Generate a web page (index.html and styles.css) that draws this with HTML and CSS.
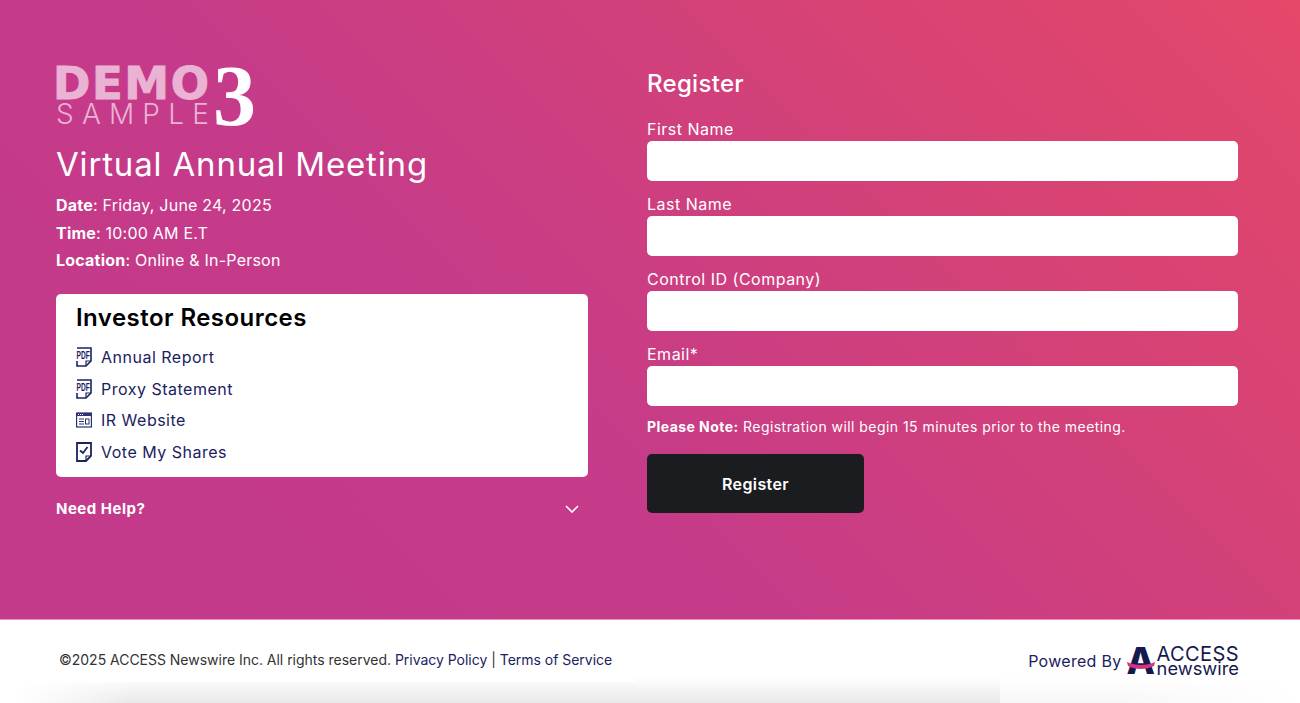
FILE: index.html
```html
<!DOCTYPE html>
<html lang="en">
<head>
    <meta charset="UTF-8">
    <meta name="viewport" content="width=device-width, initial-scale=1.0">
    <title>Virtual Annual Meeting</title>
    <link rel="stylesheet" href="styles.css">
</head>
<body>
    <main class="hero">
        <!-- Meeting details -->
        <section class="details">
            <div class="logo">
                <div class="logo-words">
                    <span class="logo-demo">DEMO</span>
                    <span class="logo-sample">SAMPLE</span>
                </div>
                <span class="logo-three">3</span>
            </div>
            <h1>Virtual Annual Meeting</h1>
            <p class="fact"><strong>Date</strong>: Friday, June 24, 2025</p>
            <p class="fact"><strong>Time</strong>: 10:00 AM E.T</p>
            <p class="fact"><strong>Location</strong>: Online &amp; In-Person</p>

            <div class="resources">
                <h2>Investor Resources</h2>
                <ul>
                    <li>
                        <svg class="res-icon" viewBox="0 0 16 20" aria-hidden="true">
                            <path d="M1 1h14v13l-5 5H1v-5" fill="none" stroke="#1a2260" stroke-width="1.6"/>
                            <path d="M10 19v-5h5" fill="none" stroke="#1a2260" stroke-width="1.2"/>
                            <rect x="0" y="2" width="13" height="11" fill="#fff"/>
                            <text class="pdf-text" transform="translate(0.5 12) scale(0.66 1)">PDF</text>
                        </svg>
                        <a href="#">Annual Report</a>
                    </li>
                    <li>
                        <svg class="res-icon" viewBox="0 0 16 20" aria-hidden="true">
                            <path d="M1 1h14v13l-5 5H1v-5" fill="none" stroke="#1a2260" stroke-width="1.6"/>
                            <path d="M10 19v-5h5" fill="none" stroke="#1a2260" stroke-width="1.2"/>
                            <rect x="0" y="2" width="13" height="11" fill="#fff"/>
                            <text class="pdf-text" transform="translate(0.5 12) scale(0.66 1)">PDF</text>
                        </svg>
                        <a href="#">Proxy Statement</a>
                    </li>
                    <li>
                        <svg class="res-icon" viewBox="0 0 16 20" aria-hidden="true">
                            <rect x="0.6" y="3" width="14.8" height="14" fill="none" stroke="#2b3370" stroke-width="1.2"/>
                            <path d="M0.6 3h14.8v3H0.6z" fill="#2b3370"/>
                            <path d="M2 4.5h1M4 4.5h1M6 4.5h1" stroke="#fff" stroke-width="1"/>
                            <path d="M3 9h5M3 11.5h5M3 14h5" stroke="#2b3370" stroke-width="1"/>
                            <rect x="9.5" y="9" width="3.5" height="5" fill="none" stroke="#2b3370" stroke-width="1"/>
                        </svg>
                        <a href="#">IR Website</a>
                    </li>
                    <li>
                        <svg class="res-icon" viewBox="0 0 16 20" aria-hidden="true">
                            <path d="M1 1h14v13l-5 5H1z" fill="none" stroke="#1a2260" stroke-width="1.8"/>
                            <path d="M10 19v-5h5" fill="none" stroke="#1a2260" stroke-width="1.2"/>
                            <path d="M4 8.5l3 2.5 4.5-6" fill="none" stroke="#1a2260" stroke-width="1.8"/>
                        </svg>
                        <a href="#">Vote My Shares</a>
                    </li>
                </ul>
            </div>

            <div class="help">
                <span>Need Help?</span>
                <svg class="chevron" viewBox="0 0 14 8" aria-hidden="true">
                    <path d="M1 1l6 6 6-6" fill="none" stroke="#fff" stroke-width="1.6"/>
                </svg>
            </div>
        </section>

        <!-- Registration form -->
        <section class="register">
            <h2>Register</h2>
            <form>
                <label for="first">First Name</label>
                <input type="text" id="first">
                <label for="last">Last Name</label>
                <input type="text" id="last">
                <label for="control">Control ID (Company)</label>
                <input type="text" id="control">
                <label for="email">Email*</label>
                <input type="email" id="email">
                <p class="note"><strong>Please Note:</strong> Registration will begin 15 minutes prior to the meeting.</p>
                <button type="button">Register</button>
            </form>
        </section>
    </main>

    <footer class="footer">
        <p class="copyright">©2025 ACCESS Newswire Inc. All rights reserved. <a href="#">Privacy Policy</a> | <a href="#">Terms of Service</a></p>
        <div class="powered">
            <span>Powered By</span>
            <div class="access-logo">
                <div class="access-mark">
                    <span class="access-a">A</span>
                    <svg class="swoosh" viewBox="0 0 28 8" aria-hidden="true">
                        <path d="M0 1c8 4 20 4 28 0l-1 4c-8 4-18 4-26 0z" fill="#d6337f"/>
                    </svg>
                </div>
                <div class="access-words">
                    <span class="access-top">ACCESS</span>
                    <span class="access-bottom">newswire</span>
                </div>
            </div>
        </div>
    </footer>
</body>
</html>
```

FILE: styles.css
```css
* {
    margin: 0;
    padding: 0;
    box-sizing: border-box;
}

html, body {
    height: 703px;
    overflow: hidden;
}

body {
    font-family: 'Inter', 'Liberation Sans', sans-serif;
    color: #fff;
    background-color: #fff;
}

.hero {
    height: 620px;
    display: flex;
    gap: 59px;
    padding: 66px 62px 0 56px;
    background: linear-gradient(45deg, #c43a8a 0%, #c53b8a 38%, #d84373 78%, #e4486a 100%);
    border-bottom: 1px solid #ee8fc0;
}

.details {
    width: 532px;
    flex-shrink: 0;
}

.logo {
    position: relative;
    height: 61px;
    width: 200px;
}

.logo-words {
    display: flex;
    flex-direction: column;
    align-items: flex-start;
    color: #eab2d3;
}

.logo-demo {
    font-family: 'DejaVu Sans', sans-serif;
    font-size: 45px;
    font-weight: 700;
    line-height: 36px;
    letter-spacing: 1.6px;
    margin-left: -3px;
    -webkit-text-stroke: 1px #eab2d3;
}

.logo-sample {
    font-size: 28px;
    font-weight: 300;
    line-height: 25px;
    letter-spacing: 8.2px;
}

.logo-three {
    position: absolute;
    left: 157px;
    top: -14px;
    font-family: 'Liberation Serif', serif;
    font-size: 86px;
    font-weight: 700;
    line-height: 88px;
    color: #fff;
}

h1 {
    font-size: 33px;
    font-weight: 400;
    line-height: 40px;
    letter-spacing: 0.83px;
    margin-top: 17px;
    margin-bottom: 8px;
}

.fact {
    font-size: 16px;
    line-height: 27.5px;
    letter-spacing: 0.22px;
}

.resources {
    background-color: #fff;
    border-radius: 5px;
    margin-top: 19px;
    height: 183px;
    padding: 8px 20px;
    color: #000;
}

.resources h2 {
    font-size: 24px;
    font-weight: 600;
    line-height: 32px;
    letter-spacing: 0.45px;
    margin-bottom: 8px;
}

.resources ul {
    list-style: none;
}

.resources li {
    display: flex;
    align-items: center;
    gap: 9px;
    height: 31.5px;
}

.resources a {
    color: #1a2260;
    font-size: 16px;
    letter-spacing: 0.5px;
    text-decoration: none;
}

.res-icon {
    width: 16px;
    height: 20px;
    flex-shrink: 0;
}

.pdf-text {
    font-family: 'Liberation Sans', sans-serif;
    font-size: 10px;
    font-weight: 700;
    fill: #1a2260;
}

.help {
    display: flex;
    justify-content: space-between;
    align-items: center;
    margin-top: 22px;
    padding-right: 9px;
    font-size: 15px;
    font-weight: 700;
    line-height: 20px;
    letter-spacing: 0.5px;
}

.chevron {
    width: 14px;
    height: 8px;
}

.register {
    width: 591px;
    flex-shrink: 0;
}

.register h2 {
    font-size: 24px;
    font-weight: 500;
    line-height: 36px;
    letter-spacing: 0.3px;
}

.register form {
    display: flex;
    flex-direction: column;
    align-items: flex-start;
    margin-top: 17px;
}

.register label {
    font-size: 16px;
    line-height: 20px;
    letter-spacing: 0.5px;
    margin-bottom: 2px;
}

.register input {
    width: 100%;
    height: 40px;
    border: none;
    border-radius: 5px;
    background-color: #fff;
    margin-bottom: 13px;
}

.note {
    font-size: 14px;
    line-height: 20px;
    letter-spacing: 0.45px;
    margin-top: -2px;
}

.register button {
    width: 217px;
    height: 59px;
    margin-top: 17px;
    border: none;
    border-radius: 5px;
    background-color: #1a1c20;
    color: #fff;
    font-family: inherit;
    font-size: 16px;
    font-weight: 600;
    letter-spacing: 0.4px;
}

.footer {
    position: relative;
    height: 83px;
    display: flex;
    justify-content: space-between;
    align-items: center;
    padding: 0 61px 5px 59px;
    color: #333;
    background-color: #fff;
}

/* soft grey band along the bottom edge */
.footer::after {
    content: "";
    position: absolute;
    left: 15px;
    width: 985px;
    bottom: 0;
    height: 27px;
    background:
        linear-gradient(#fff, #fff) top left / 620px 6px no-repeat,
        linear-gradient(to bottom, rgba(233, 233, 233, 0), #e9e9e9);
    -webkit-mask-image: linear-gradient(to right, transparent, #000 12%);
    mask-image: linear-gradient(to right, transparent, #000 12%);
}

.footer::before {
    content: "";
    position: absolute;
    left: 1000px;
    right: 0;
    bottom: 0;
    height: 27px;
    background: linear-gradient(to bottom, rgba(248, 248, 248, 0), #f7f7f7);
    -webkit-mask-image: linear-gradient(to right, #000 40%, transparent);
    mask-image: linear-gradient(to right, #000 40%, transparent);
}

.copyright {
    font-size: 14px;
    letter-spacing: -0.02px;
}

.copyright a {
    color: #1a2260;
    text-decoration: none;
}

.powered {
    display: flex;
    align-items: center;
    gap: 5px;
    font-size: 16px;
    letter-spacing: 0.3px;
    color: #1a2260;
    margin-top: 3px;
}

.access-logo {
    display: flex;
    align-items: center;
    color: #14194f;
}

.access-mark {
    position: relative;
    width: 30px;
    height: 28px;
}

.access-a {
    display: block;
    font-size: 37px;
    font-weight: 800;
    line-height: 28px;
    letter-spacing: 0;
    text-align: left;
}

.swoosh {
    position: absolute;
    left: 0;
    top: 14px;
    width: 28px;
    height: 8px;
}

.access-words {
    display: flex;
    flex-direction: column;
}

.access-top {
    font-size: 20px;
    line-height: 14px;
    letter-spacing: 0.4px;
}

.access-bottom {
    font-size: 18.3px;
    line-height: 14px;
    letter-spacing: 0;
}
```
